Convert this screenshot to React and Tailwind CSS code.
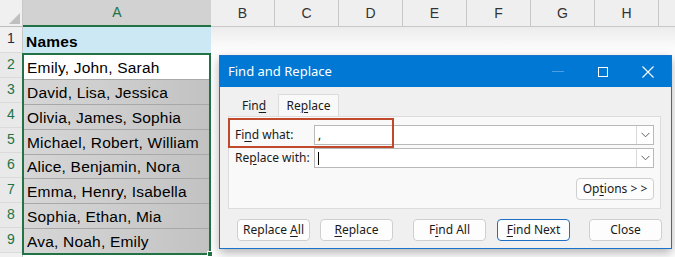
import React from 'react';

const names = [
  'David, Lisa, Jessica',
  'Olivia, James, Sophia',
  'Michael, Robert, William',
  'Alice, Benjamin, Nora',
  'Emma, Henry, Isabella',
  'Sophia, Ethan, Mia',
  'Ava, Noah, Emily',
];

const cols = ['B', 'C', 'D', 'E', 'F', 'G', 'H', ''];

function U({ children }) {
  return <span className="underline underline-offset-2">{children}</span>;
}

function Chevron() {
  return (
    <div className="w-[17px] h-full border-l border-[#d9d9d9] flex items-center justify-center">
      <svg width="9" height="6" viewBox="0 0 9 6" fill="none" stroke="#606060" strokeWidth="1">
        <path d="M0.5 0.8 L4.5 4.8 L8.5 0.8" />
      </svg>
    </div>
  );
}

function Btn({ children, primary }) {
  return (
    <div
      className={`w-[73px] h-[22px] rounded-[4px] bg-[#fdfdfd] flex items-center justify-center text-[12px] text-[#1a1a1a] ${
        primary ? 'border border-[#1f6fc5]' : 'border border-[#cfcfcf]'
      }`}
    >
      <span className="whitespace-pre">{children}</span>
    </div>
  );
}

function Dialog() {
  return (
    <div className="absolute left-[219px] top-[55px] w-[453px] h-[194px] border border-[#1a73c9] bg-[#f0f0f0] shadow-[0_4px_10px_rgba(0,0,0,0.3)] flex flex-col font-['Noto_Sans','Open_Sans',sans-serif]">
      {/* title bar */}
      <div className="h-[31px] bg-[#0078d4] flex items-center pl-[8px] text-white text-[13px]">
        <span className="flex-1">Find and Replace</span>
        <div className="w-[12px] h-px bg-[#4d9fe0] mr-[34px]" />
        <div className="w-[10px] h-[10px] border border-white mr-[34px]" />
        <svg width="12" height="12" viewBox="0 0 12 12" stroke="white" strokeWidth="1.1" className="mr-[17px]">
          <path d="M0.5 0.5 L11.5 11.5 M11.5 0.5 L0.5 11.5" />
        </svg>
      </div>

      <div className="relative flex-1 flex flex-col px-[8px] pt-[7px]">
        {/* tabs */}
        <div className="flex h-[22px] items-end text-[12px] text-[#1a1a1a]">
          <div className="w-[50px] h-[20px] flex items-center pl-[14px]">
            <span>
              Fin<U>d</U>
            </span>
          </div>
          <div className="w-[61px] h-[22px] bg-[#f9f9f9] border border-b-0 border-[#dcdcdc] flex items-center justify-center">
            <span>
              Re<U>p</U>lace
            </span>
          </div>
        </div>

        {/* panel */}
        <div className="w-[433px] h-[93px] bg-[#f9f9f9] border border-[#dcdcdc] flex flex-col pl-[6px] pr-[6px] pt-[8px] text-[12px] text-[#1a1a1a]">
          <div className="flex items-center h-[20px]">
            <span className="w-[79px]">
              Fi<U>n</U>d what:
            </span>
            <div className="flex-1 h-[20px] bg-white border border-[#b9b9b9] flex items-center">
              <span className="flex-1 pl-[3px] leading-none">,</span>
              <Chevron />
            </div>
          </div>
          <div className="flex items-center h-[20px] mt-[3px]">
            <span className="w-[79px]">
              Re<U>p</U>lace with:
            </span>
            <div className="flex-1 h-[20px] bg-white border border-[#b9b9b9] flex items-center">
              <div className="flex-1 pl-[3px] flex items-center">
                <div className="w-px h-[13px] bg-black" />
              </div>
              <Chevron />
            </div>
          </div>
          <div className="flex justify-end mt-[10px]">
            <div className="w-[78px] h-[22px] rounded-[4px] bg-[#fdfdfd] border border-[#cfcfcf] flex items-center justify-center">
              <span className="whitespace-pre">
                Op<U>t</U>ions &gt; &gt;
              </span>
            </div>
          </div>
        </div>

        {/* buttons */}
        <div className="flex mt-[10px] pl-[9px]">
          <Btn>
            Replace <U>A</U>ll
          </Btn>
          <div className="w-[10px]" />
          <Btn>
            <U>R</U>eplace
          </Btn>
          <div className="w-[20px]" />
          <Btn>
            F<U>i</U>nd All
          </Btn>
          <div className="w-[11px]" />
          <Btn primary>
            <U>F</U>ind Next
          </Btn>
          <div className="w-[19px]" />
          <Btn>Close</Btn>
        </div>

        {/* highlight */}
        <div className="absolute left-[8px] top-[31px] w-[166px] h-[30px] border-2 border-[#c0482b]" />
      </div>
    </div>
  );
}

export default function App() {
  return (
    <div className="relative w-[675px] h-[257px] overflow-hidden bg-white font-['Liberation_Sans',Arial,sans-serif]">
      <div className="flex">
        {/* row headers */}
        <div className="w-[23px] shrink-0 flex flex-col bg-[#f0f0f0] border-r border-[#c8c8c8] text-[14px]">
          <div className="h-[27px] border-b border-[#bdbdbd] relative">
            <div className="absolute right-[2px] bottom-[2px] w-0 h-0 border-l-[11px] border-l-transparent border-b-[11px] border-b-[#bfbfbf]" />
          </div>
          <div className="h-[26px] flex items-end justify-center pb-[3px] text-[#1f2a44] border-b border-[#dadada]">1</div>
          {[2, 3, 4, 5, 6, 7, 8, 9].map((n) => (
            <div
              key={n}
              className="h-[25px] flex items-end justify-center pb-[2px] text-[#217346] border-b border-[#dadada] bg-[#e9e9e9]"
            >
              {n}
            </div>
          ))}
          <div className="h-[25px]" />
        </div>

        {/* column A */}
        <div className="w-[188px] shrink-0 flex flex-col whitespace-nowrap">
          <div className="h-[27px] bg-[#d2d2d2] border-b-2 border-[#217346] flex items-center justify-center text-[14px] text-[#217346]">
            A
          </div>
          <div className="h-[26px] bg-[#cce8f5] flex items-end pl-[3px] pb-[2px] text-[15.5px] leading-[19px] tracking-[0.2px] font-bold text-black">
            Names
          </div>
          <div className="relative -ml-px h-[202px] border-2 border-[#217346] flex flex-col text-[15.5px] leading-[19px] tracking-[0.2px] text-black">
            <div className="h-[24px] bg-white flex items-end pl-[3px] pb-[2px]">Emily, John, Sarah</div>
            {names.map((t) => (
              <div
                key={t}
                className="h-[25px] bg-gradient-to-r from-[#d6d6d6] via-[#cdcdcd] to-[#c2c2c2] border-t border-[#a8a8a8] flex items-end pl-[3px] pb-[2px]"
              >
                {t}
              </div>
            ))}
            <div className="absolute -right-[4px] -bottom-[4px] w-[6px] h-[6px] bg-[#217346] border border-white" />
          </div>
        </div>

        {/* other columns */}
        {cols.map((c, i) => (
          <div key={i} className="w-[64px] shrink-0 flex flex-col">
            <div className="h-[27px] bg-[#efefef] border-r border-b border-[#c8c8c8] flex items-center justify-center text-[14px] text-[#333]">
              {c}
            </div>
            <div className="h-[26px] bg-gradient-to-b from-[#ececec] to-white" />
          </div>
        ))}
      </div>

      <Dialog />
    </div>
  );
}
